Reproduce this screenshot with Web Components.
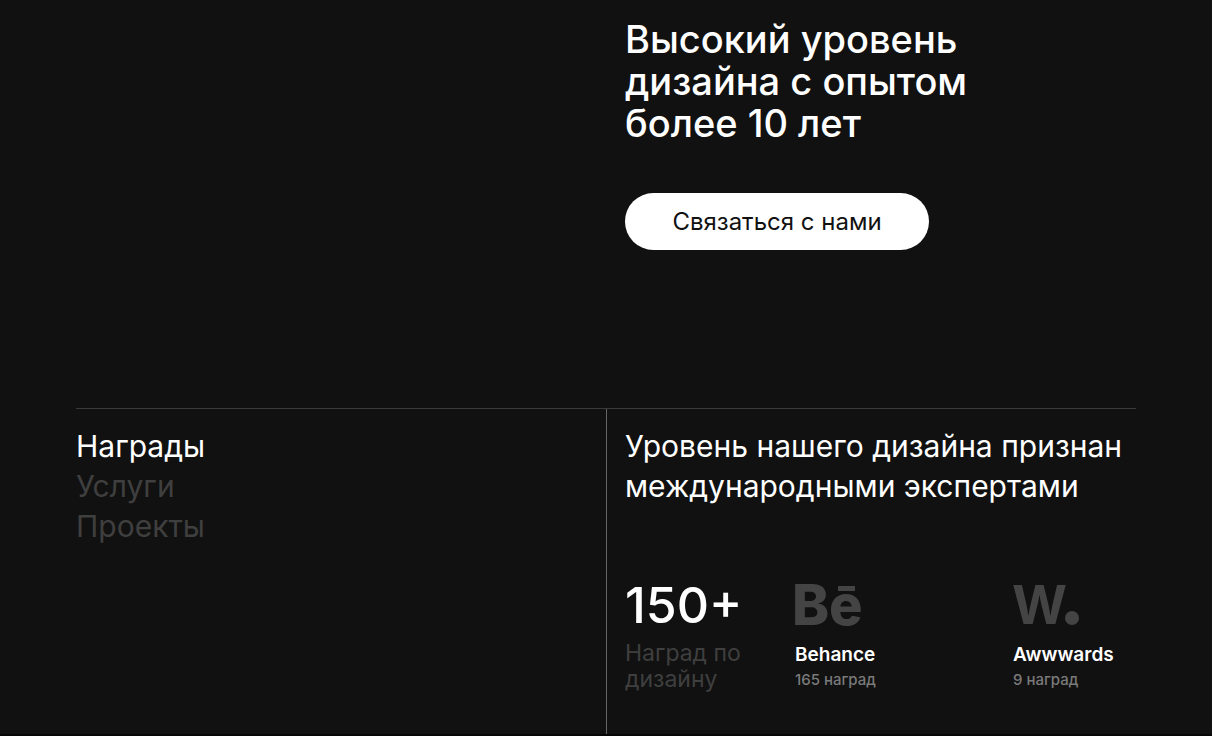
<!DOCTYPE html>
<html lang="ru">
<head>
<meta charset="utf-8">
<meta name="viewport" content="width=device-width, initial-scale=1">
<title>Дизайн-студия</title>
<style>
  body { margin: 0; background: #111; color: #fff; font-family: Inter, "Liberation Sans", sans-serif; }
</style>
</head>
<body>
<studio-page>
  <studio-intro slot="intro">
    Высокий уровень<br>дизайна с опытом<br>более 10 лет
    <pill-button slot="action">Связаться с нами</pill-button>
  </studio-intro>
  <section-nav slot="nav"></section-nav>
  <awards-panel slot="panel">
    <span slot="title">Уровень нашего дизайна признан<br>международными экспертами</span>
    <award-total slot="stats">
      <span slot="value">150+</span>
      <span slot="label">Наград по<br>дизайну</span>
    </award-total>
    <award-source slot="stats">
      <behance-logo slot="logo"></behance-logo>
      <span slot="name">Behance</span>
      <span slot="count">165 наград</span>
    </award-source>
    <award-source slot="stats">
      <awwwards-logo slot="logo"></awwwards-logo>
      <span slot="name">Awwwards</span>
      <span slot="count">9 наград</span>
    </award-source>
  </awards-panel>
</studio-page>

<script>
const define = (name, html) => {
  customElements.define(name, class extends HTMLElement {
    constructor() {
      super();
      const template = document.createElement('template');
      template.innerHTML = html;
      this.attachShadow({ mode: 'open' }).append(template.content.cloneNode(true));
    }
  });
};

define('studio-page', `
  <style>
    :host { display: flex; flex-direction: column; min-height: 100vh; box-sizing: border-box; padding: 0 76px; border-bottom: 2px solid #060606; }
    .top, .bottom { display: grid; grid-template-columns: minmax(0, 1fr) minmax(0, 1fr); }
    .top { padding: 18px 0 158px; }
    .top ::slotted(*) { grid-column: 2; }
    .bottom { flex: 1; border-top: 1px solid #3a3a3a; }
  </style>
  <header class="top"><slot name="intro"></slot></header>
  <main class="bottom"><slot name="nav"></slot><slot name="panel"></slot></main>
`);

define('studio-intro', `
  <style>
    :host { display: block; padding-left: 19px; }
    h1 { margin: 0 0 49px; font-size: 38px; line-height: 42px; font-weight: 500; white-space: nowrap; }
  </style>
  <h1><slot></slot></h1>
  <slot name="action"></slot>
`);

define('pill-button', `
  <style>
    :host { display: block; }
    button { display: block; min-width: 304px; height: 57px; padding: 0 46px; border: 0; border-radius: 29px; background: #fff; color: #111; font: 400 24px/56px Inter, "Liberation Sans", sans-serif; white-space: nowrap; cursor: pointer; }
  </style>
  <button type="button"><slot></slot></button>
`);

define('section-nav', `
  <style>
    :host { display: block; padding-top: 17px; }
    ul { list-style: none; margin: 0; padding: 0; }
    a { display: block; width: max-content; color: #3f3f3f; text-decoration: none; font-size: 30px; line-height: 40px; }
    a[aria-current] { color: #fff; }
  </style>
  <nav><ul>
    <li><a href="#awards" aria-current="true">Награды</a></li>
    <li><a href="#services">Услуги</a></li>
    <li><a href="#projects">Проекты</a></li>
  </ul></nav>
`);

define('awards-panel', `
  <style>
    :host { display: block; padding: 17px 0 40px 18px; border-left: 1px solid #666; }
    h2 { margin: 0 0 73px; font-size: 30px; line-height: 40px; font-weight: 400; white-space: nowrap; }
    .stats { display: grid; grid-template-columns: 170fr 218fr 123fr; }
  </style>
  <h2><slot name="title"></slot></h2>
  <div class="stats"><slot name="stats"></slot></div>
`);

define('award-total', `
  <style>
    :host { display: block; white-space: nowrap; }
    .value { font-size: 50px; line-height: 52px; font-weight: 500; }
    .label { margin-top: 9px; font-size: 23px; line-height: 26px; color: #3f3f3f; }
  </style>
  <div class="value"><slot name="value"></slot></div>
  <div class="label"><slot name="label"></slot></div>
`);

define('award-source', `
  <style>
    :host { display: block; white-space: nowrap; }
    .logo { height: 52px; }
    .name { margin-top: 11px; font-size: 19px; line-height: 25px; font-weight: 600; }
    .count { font-size: 15px; line-height: 25px; font-weight: 500; color: #7a7a7a; }
  </style>
  <div class="logo"><slot name="logo"></slot></div>
  <div class="name"><slot name="name"></slot></div>
  <div class="count"><slot name="count"></slot></div>
`);

define('behance-logo', `
  <style>
    :host { display: block; }
    svg { display: block; overflow: visible; font: 800 56px Inter, "Liberation Sans", sans-serif; fill: #444; }
  </style>
  <svg width="70" height="52" viewBox="0 0 70 52" role="img" aria-label="Behance">
    <text x="-3" y="46">B</text><text x="34" y="46">e</text><rect x="43" y="7" width="17" height="5"/>
  </svg>
`);

define('awwwards-logo', `
  <style>
    :host { display: block; }
    svg { display: block; overflow: visible; font: 700 53px Inter, "Liberation Sans", sans-serif; fill: #444; }
  </style>
  <svg width="70" height="52" viewBox="0 0 70 52" role="img" aria-label="Awwwards">
    <text x="-1" y="45">W</text><circle cx="59" cy="39" r="7"/>
  </svg>
`);
</script>
</body>
</html>
